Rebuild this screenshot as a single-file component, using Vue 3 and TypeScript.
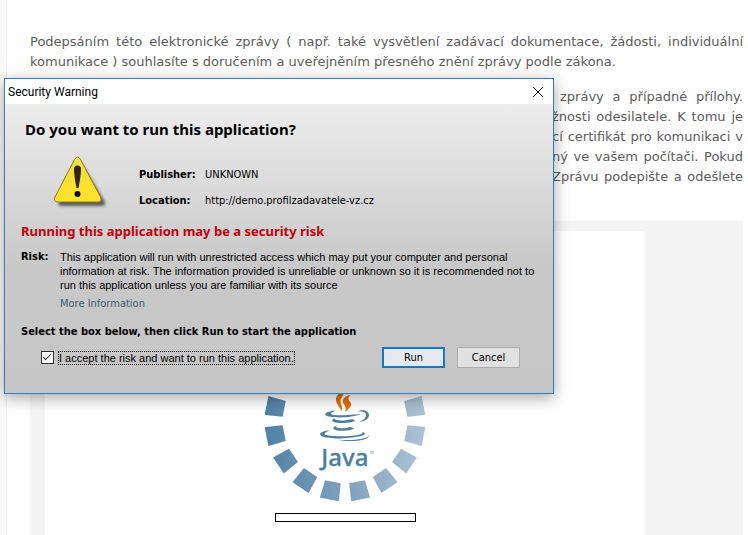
<script setup lang="ts">
import { ref } from 'vue'

const accepted = ref<boolean>(true)

const textTail: string[] = [
  'zprávy a případné přílohy.',
  'žnosti odesilatele. K tomu je',
  'cí certifikát pro komunikaci v',
  'ný ve vašem počítači. Pokud',
  'Zprávu podepište a odešlete',
]

const tileAngles: number[] = Array.from({ length: 16 }, (_, i) => i * 22.5 + 11.25)
</script>

<template>
  <div class="page">
    <main class="content">
      <p class="intro">
        <span class="full-line">Podepsáním této elektronické zprávy ( např. také vysvětlení zadávací dokumentace, žádosti, individuální</span>
        <span class="last-line">komunikace ) souhlasíte s doručením a uveřejněním přesného znění zprávy podle zákona.</span>
      </p>
      <p class="tail">
        <span v-for="line in textTail" :key="line" class="full-line">{{ line }}</span>
      </p>
      <section class="applet-frame">
        <div class="applet">
          <svg class="loader" viewBox="45 -135 480 480" role="img" aria-label="Java">
            <defs>
              <linearGradient id="ring" gradientUnits="userSpaceOnUse" x1="45" y1="0" x2="525" y2="0">
                <stop offset="0" stop-color="#5081a6" />
                <stop offset="0.5" stop-color="#7fa1bd" />
                <stop offset="1" stop-color="#adc3d5" />
              </linearGradient>
              <mask id="tiles" maskUnits="userSpaceOnUse" x="45" y="-135" width="480" height="480">
                <path
                  v-for="angle in tileAngles"
                  :key="angle"
                  d="M261 291H309L314 345H256Z"
                  fill="#fff"
                  :transform="`rotate(${angle} 285 105)`"
                />
              </mask>
            </defs>
            <rect x="45" y="-135" width="480" height="480" fill="url(#ring)" mask="url(#tiles)" />
            <g fill="#e0700f">
              <path d="M281 -12C291 10 258 21 258 40C258 54 269 63 275 75C280 63 270 53 272 43C275 29 296 15 281 -12Z" />
              <path d="M303 26C285 29 277 39 279 48C280 57 291 61 286 77C299 67 308 58 301 48C295 40 291 35 303 26Z" />
            </g>
            <g fill="#4f7f9f">
              <path d="M259 73C235 76 222 82 226 87C235 97 305 97 334 84C306 86 255 91 244 85C240 82 248 78 259 73Z" />
              <path d="M323 77C340 68 357 75 357 88C357 99 345 106 326 109C341 102 348 96 348 87C348 77 337 75 323 77Z" />
              <path d="M252 97C236 108 257 112 280 111C295 111 307 108 316 105L307 99C289 104 257 107 252 97Z" />
              <path d="M256 119C240 130 259 135 280 134C294 134 304 131 312 128L301 122C285 128 258 129 256 119Z" />
              <path d="M239 133C215 135 205 144 213 149C230 160 309 160 340 148C348 144 345 140 337 138C342 145 322 148 299 150C270 153 226 149 224 145C222 142 228 138 239 133Z" />
              <path d="M357 147C354 159 308 165 262 161C300 170 360 164 357 147Z" />
            </g>
            <text x="214" y="240" class="wordmark">Java</text>
            <text x="359" y="203" class="trademark">TM</text>
          </svg>
          <div class="progress" role="progressbar" aria-label="Loading"></div>
        </div>
      </section>
    </main>

    <div class="dialog" role="dialog" aria-labelledby="dialog-title">
      <header class="titlebar">
        <span id="dialog-title">Security Warning</span>
        <button class="close" type="button" aria-label="Close">
          <svg viewBox="0 0 12 12"><path d="M1 1L11 11M11 1L1 11" /></svg>
        </button>
      </header>
      <div class="body">
        <h1>Do you want to run this application?</h1>
        <div class="source">
          <svg class="warning" viewBox="0 0 60 56" aria-hidden="true">
            <defs>
              <linearGradient id="sign" x1="0" y1="0" x2="0.3" y2="1">
                <stop offset="0" stop-color="#f3e36b" />
                <stop offset="0.5" stop-color="#f7de35" />
                <stop offset="1" stop-color="#ffe32c" />
              </linearGradient>
              <filter id="soft" x="-20%" y="-20%" width="140%" height="140%">
                <feGaussianBlur stdDeviation="1.5" />
              </filter>
            </defs>
            <path d="M30 6L54 46Q55 50 51 50H10Q6 50 8 46Z" fill="#333" opacity="0.75" filter="url(#soft)" />
            <path
              d="M23.500 3.500Q26.500 -1.500 29.500 3.500L49.500 41Q51.500 46 46.500 46H7Q2 46 4 41Z"
              fill="url(#sign)"
              stroke="#8d7714"
            />
            <path d="M23 13Q23 9.500 26.500 9.500T30 13Q30 20 27.500 32H25.500Q23 20 23 13Z" fill="#2c2a12" />
            <circle cx="26.500" cy="38" r="3" fill="#080808" />
          </svg>
          <dl>
            <dt>Publisher:</dt>
            <dd>UNKNOWN</dd>
            <dt>Location:</dt>
            <dd>http://demo.profilzadavatele-vz.cz</dd>
          </dl>
        </div>
        <h2>Running this application may be a security risk</h2>
        <div class="risk">
          <strong>Risk:</strong>
          <div>
            <p>
              This application will run with unrestricted access which may put your computer and personal<br />
              information at risk. The information provided is unreliable or unknown so it is recommended not to<br />
              run this application unless you are familiar with its source
            </p>
            <a href="#">More Information</a>
          </div>
        </div>
        <strong class="instruction">Select the box below, then click Run to start the application</strong>
        <div class="actions">
          <label class="accept">
            <input v-model="accepted" type="checkbox" />
            <span>I accept the risk and want to run this application.</span>
          </label>
          <button class="action primary" type="button" :disabled="!accepted">Run</button>
          <button class="action" type="button">Cancel</button>
        </div>
      </div>
    </div>
  </div>
</template>

<style>
body {
  margin: 0;
}
</style>

<style scoped>
.page {
  position: relative;
  box-sizing: border-box;
  display: flex;
  min-height: 100vh;
  padding-left: 6px;
  overflow: hidden;
  background: #fafafa;
}

.content {
  flex: 1;
  display: flex;
  flex-direction: column;
  min-width: 0;
  padding: 32px 5px 0 23px;
  border-left: 1px solid #eee;
  background: #fefefe;
  color: #5c5c5c;
  font: 13px/20px 'DejaVu Sans', sans-serif;
}

.content p {
  margin: 0 0 15px;
  white-space: nowrap;
}

.full-line,
.last-line {
  display: block;
}

.full-line {
  white-space: normal;
  text-align-last: justify;
}

.content .tail {
  align-self: flex-end;
  width: 191px;
  margin-bottom: 34px;
}

.tail .full-line:first-child {
  padding-left: 8px;
}

.applet-frame {
  flex: 1;
  display: flex;
  padding: 10px 15px 0;
  background: #f4f4f4;
}

.applet {
  box-sizing: border-box;
  display: flex;
  flex-direction: column;
  align-items: center;
  gap: 12px;
  width: 600px;
  padding-top: 110px;
  background: #fff;
}

.loader {
  display: block;
  width: 160px;
  height: 160px;
}

.wordmark {
  fill: #4f7f9f;
  stroke: #4f7f9f;
  stroke-width: 1px;
  font: 500 72px 'Noto Sans', sans-serif;
}

.trademark {
  fill: #4f7f9f;
  font: 8px 'Noto Sans', sans-serif;
}

.progress {
  box-sizing: border-box;
  width: 141px;
  height: 9px;
  border: 1px solid #000;
}

.dialog {
  position: absolute;
  top: 78px;
  left: 4px;
  box-sizing: border-box;
  width: 550px;
  border: 1px solid #2f7fc1;
  box-shadow: 0 4px 14px rgba(0, 0, 0, 0.35);
  color: #000;
  font: 11px/14px 'DejaVu Sans Condensed', sans-serif;
}

.titlebar {
  display: flex;
  align-items: center;
  justify-content: space-between;
  height: 25px;
  padding: 0 9px 0 3px;
  background: #fff;
  font: 12px/16px Roboto, sans-serif;
}

.close {
  width: 12px;
  height: 12px;
  padding: 0;
  border: 0;
  background: none;
}

.close svg {
  display: block;
  fill: none;
  stroke: #000;
}

.body {
  display: flex;
  flex-direction: column;
  padding: 15px 16px 25px;
  background: linear-gradient(#ededed, #c8c8c8 164px, #c6c6c6);
}

h1,
h2,
p,
dl,
dd {
  margin: 0;
}

h1 {
  padding-left: 4px;
  font: bold 15px/20px 'Noto Sans', sans-serif;
}

.source {
  display: flex;
  align-items: flex-start;
  gap: 28px;
  margin-top: 17px;
  padding-left: 30px;
}

.warning {
  width: 60px;
  height: 56px;
}

dl {
  display: grid;
  grid-template-columns: 66px auto;
  row-gap: 12px;
  padding-top: 12px;
}

dt {
  font-weight: bold;
}

h2 {
  margin-top: 9px;
  color: #c4000c;
  font: bold 13px/20px 'Noto Sans', sans-serif;
}

.risk {
  display: grid;
  grid-template-columns: 39px 1fr;
  margin-top: 9px;
}

.risk p {
  font-family: 'Liberation Sans', sans-serif;
  white-space: nowrap;
}

.risk a {
  display: inline-block;
  margin-top: 5px;
  color: #425b70;
  text-decoration: none;
}

.instruction {
  margin-top: 14px;
}

.actions {
  display: flex;
  align-items: center;
  gap: 12px;
  margin-top: 8px;
  padding: 0 17px 0 20px;
}

.accept {
  display: flex;
  align-items: center;
  gap: 4px;
  margin-right: auto;
  white-space: nowrap;
}

.accept input {
  appearance: none;
  box-sizing: border-box;
  width: 13px;
  height: 13px;
  margin: 0;
  border: 1px solid #333;
  background: #fff;
}

.accept input:checked::after {
  content: '';
  display: block;
  width: 7px;
  height: 3px;
  margin: 2px 0 0 1px;
  border: solid #333;
  border-width: 0 0 1px 1px;
  transform: rotate(-45deg);
}

.accept span {
  border: 1px dotted #000;
  font-family: 'Liberation Sans', sans-serif;
  line-height: 12px;
}

.action {
  box-sizing: border-box;
  width: 63px;
  height: 21px;
  padding: 0;
  border: 1px solid #adadad;
  background: #e1e1e1;
  color: #000;
  font: inherit;
}

.action.primary {
  border: 2px solid #1777c7;
  background: #e3e9ef;
}
</style>
